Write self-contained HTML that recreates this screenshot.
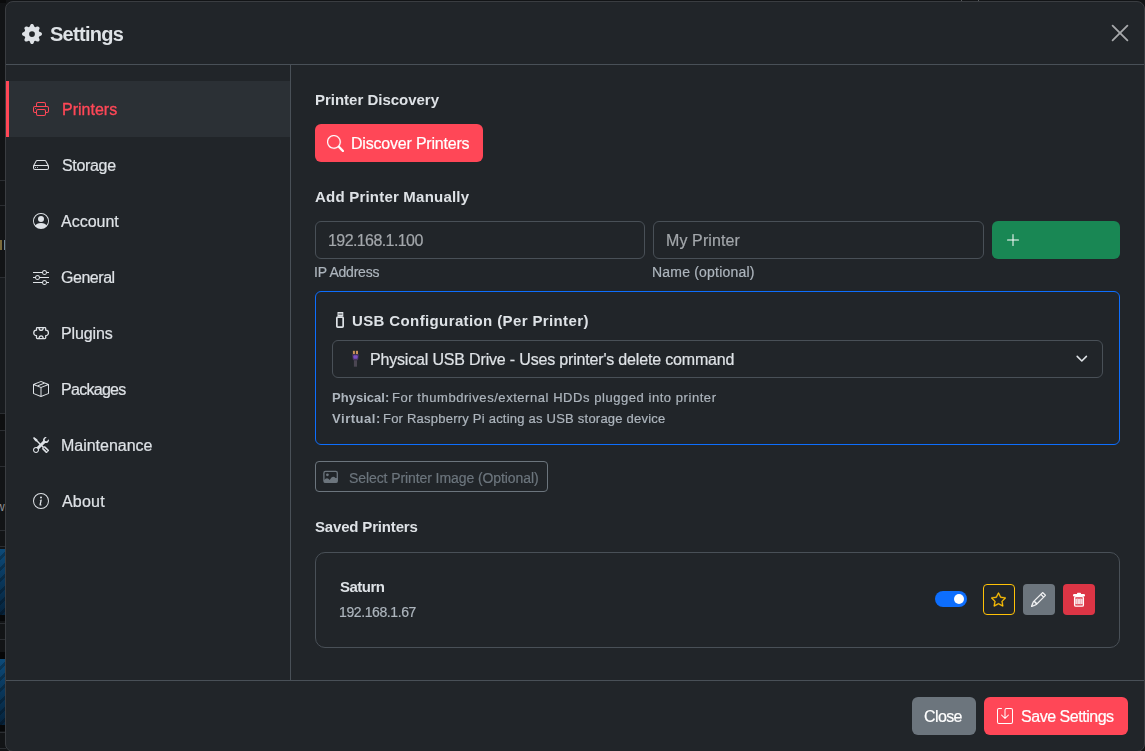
<!DOCTYPE html>
<html><head><meta charset="utf-8">
<style>
*{box-sizing:border-box;margin:0;padding:0}
html,body{width:1145px;height:751px;overflow:hidden;background:#121416;font-family:"Liberation Sans",sans-serif;color:#dee2e6}
.a{position:absolute}
.t{position:absolute;white-space:nowrap;line-height:1;will-change:transform;-webkit-text-stroke:0.2px currentColor}
svg{display:block}
#modal{left:5px;top:1px;width:1140px;height:751px;background:#212529;border:1px solid #3a3d41;border-radius:8px;overflow:hidden}
.hl{position:absolute;height:1px;background:#495057}
.vl{position:absolute;width:1px;background:#495057}
.nav{position:absolute;left:6px;width:284px;height:56px}
.nav .ic{position:absolute;left:27px;top:20px;width:16px;height:16px}
.nav .tx{position:absolute;left:55px;top:0;line-height:1;font-size:16px;white-space:nowrap}
.btn{position:absolute;border-radius:6px}
.inp{position:absolute;border:1px solid #495057;border-radius:6px;background:#212529}
</style></head>
<body>
<!-- background strip -->
<div class="a" style="left:961px;top:0;width:1px;height:2px;background:#55595d"></div>
<div class="a" style="left:978px;top:0;width:1px;height:2px;background:#55595d"></div>
<div class="a" style="left:0;top:0;width:6px;height:3px;background:#0b0c0d"></div>
<div class="a" style="left:0;top:180px;width:5px;height:1px;background:#2a2d31"></div>
<div class="a" style="left:0;top:205px;width:5px;height:1px;background:#2a2d31"></div>
<div class="a" style="left:0;top:240px;width:2px;height:10px;background:#7a6a3a"></div>
<div class="a" style="left:3.5px;top:240px;width:1.5px;height:10px;background:#6f8a98"></div>
<div class="a" style="left:0;top:277px;width:5px;height:1px;background:#2a2d31"></div>
<div class="a" style="left:0;top:278px;width:5px;height:135px;background:#171a1d"></div>
<div class="a" style="left:0;top:413px;width:5px;height:1px;background:#2a2d31"></div>
<div class="a" style="left:0;top:414px;width:5px;height:16px;background:#0e0f10"></div>
<div class="a" style="left:0;top:430px;width:5px;height:1px;background:#2a2d31"></div>
<div class="a" style="left:0;top:466px;width:5px;height:1px;background:#2a2d31"></div>
<div class="a" style="left:-4px;top:500px;font-size:12px;line-height:14px;color:#8f959b">w</div>
<div class="a" style="left:0;top:530px;width:5px;height:1px;background:#2a2d31"></div>
<div class="a" style="left:0;top:546px;width:5px;height:1px;background:#2a2d31"></div>
<div class="a" style="left:0;top:549px;width:5px;height:66px;background:repeating-linear-gradient(135deg,rgba(0,0,0,0) 0 5px,rgba(0,0,0,0.25) 5px 8px),linear-gradient(#0d4a78,#05223b)"></div>
<div class="a" style="left:0;top:615px;width:5px;height:6px;background:#060708"></div>
<div class="a" style="left:0;top:623px;width:5px;height:1px;background:#2a2d31"></div>
<div class="a" style="left:0;top:639px;width:5px;height:1px;background:#2a2d31"></div>
<div class="a" style="left:0;top:652px;width:5px;height:7px;background:#060708"></div>
<div class="a" style="left:0;top:659px;width:5px;height:66px;background:repeating-linear-gradient(135deg,rgba(0,0,0,0) 0 5px,rgba(0,0,0,0.25) 5px 8px),linear-gradient(#0d4a78,#05223b)"></div>
<div class="a" style="left:0;top:725px;width:5px;height:6px;background:#060708"></div>
<div class="a" style="left:0;top:732px;width:5px;height:1px;background:#2a2d31"></div>
<div class="a" style="left:0;top:748px;width:6px;height:1px;background:#2a2d31"></div>

<div id="modal" class="a"></div>

<!-- header -->
<svg class="a" id="gear" style="left:22px;top:24px" width="20" height="20" viewBox="0 0 16 16" fill="#dee2e6"><path d="M9.405 1.05c-.413-1.4-2.397-1.4-2.81 0l-.1.34a1.464 1.464 0 0 1-2.105.872l-.31-.17c-1.283-.698-2.686.705-1.987 1.987l.169.311c.446.82.023 1.841-.872 2.105l-.34.1c-1.4.413-1.4 2.397 0 2.81l.34.1a1.464 1.464 0 0 1 .872 2.105l-.17.31c-.698 1.283.705 2.686 1.987 1.987l.311-.169a1.464 1.464 0 0 1 2.105.872l.1.34c.413 1.4 2.397 1.4 2.81 0l.1-.34a1.464 1.464 0 0 1 2.105-.872l.31.17c1.283.698 2.686-.705 1.987-1.987l-.169-.311a1.464 1.464 0 0 1 .872-2.105l.34-.1c1.4-.413 1.4-2.397 0-2.81l-.34-.1a1.464 1.464 0 0 1-.872-2.105l.17-.31c.698-1.283-.705-2.686-1.987-1.987l-.311.169a1.464 1.464 0 0 1-2.105-.872zM8 10.3a2.3 2.3 0 1 1 0-4.6 2.3 2.3 0 0 1 0 4.6z"/></svg>
<div class="t" id="title" style="left:50.0px;top:24px;font-size:20px;font-weight:bold;color:#dee2e6;letter-spacing:-0.715px;-webkit-text-stroke:0">Settings</div>
<svg class="a" style="left:1111px;top:24px" width="18" height="18" viewBox="0 0 18 18"><path d="M1.6 1.6L16.4 16.4M16.4 1.6L1.6 16.4" stroke="#a7a9ab" stroke-width="1.8" stroke-linecap="round"/></svg>

<div class="hl" style="left:6px;top:64px;width:1138px"></div>
<div class="vl" style="left:290px;top:65px;height:615px"></div>
<div class="hl" style="left:6px;top:680px;width:1138px"></div>

<!-- sidebar -->
<div class="a" style="left:6px;top:81px;width:284px;height:56px;background:#2b3035"></div>
<div class="a" style="left:6px;top:81px;width:3px;height:56px;background:#ff4757"></div>


<!-- nav items -->
<svg class="a" style="left:33px;top:101px" width="16" height="16" viewBox="0 0 16 16" fill="#ff4757"><path d="M2.5 8a.5.5 0 1 0 0-1 .5.5 0 0 0 0 1"/><path d="M5 1a2 2 0 0 0-2 2v2H2a2 2 0 0 0-2 2v3a2 2 0 0 0 2 2h1v1a2 2 0 0 0 2 2h6a2 2 0 0 0 2-2v-1h1a2 2 0 0 0 2-2V7a2 2 0 0 0-2-2h-1V3a2 2 0 0 0-2-2zM4 3a1 1 0 0 1 1-1h6a1 1 0 0 1 1 1v2H4zm1 5a2 2 0 0 0-2 2v1H2a1 1 0 0 1-1-1V7a1 1 0 0 1 1-1h12a1 1 0 0 1 1 1v3a1 1 0 0 1-1 1h-1v-1a2 2 0 0 0-2-2zm7 2v3a1 1 0 0 1-1 1H5a1 1 0 0 1-1-1v-3a1 1 0 0 1 1-1h6a1 1 0 0 1 1 1"/></svg>
<div class="t" id="n1" style="left:62.0px;top:101.5px;font-size:16px;color:#ff4757;-webkit-text-stroke:0.35px #ff4757;letter-spacing:-0.0px">Printers</div>

<svg class="a" style="left:33px;top:157px" width="16" height="16" viewBox="0 0 16 16" fill="#dee2e6"><path d="M4.5 11a.5.5 0 1 0 0-1 .5.5 0 0 0 0 1M3 10.5a.5.5 0 1 1-1 0 .5.5 0 0 1 1 0"/><path d="M16 11a2 2 0 0 1-2 2H2a2 2 0 0 1-2-2V9.51c0-.418.105-.83.305-1.197l2.472-4.531A1.5 1.5 0 0 1 4.094 3h7.812a1.5 1.5 0 0 1 1.317.782l2.472 4.53c.2.368.305.78.305 1.198zM3.655 4.26 1.592 8.043Q1.790 8 2 8h12q.21 0 .408.042L12.345 4.26a.5.5 0 0 0-.439-.26H4.094a.5.5 0 0 0-.44.26zM1 10v1a1 1 0 0 0 1 1h12a1 1 0 0 0 1-1v-1a1 1 0 0 0-1-1H2a1 1 0 0 0-1 1"/></svg>
<div class="t" id="n2" style="left:61.8px;top:157.5px;font-size:16px;letter-spacing:-0.334px">Storage</div>

<svg class="a" style="left:33px;top:213px" width="16" height="16" viewBox="0 0 16 16" fill="#dee2e6"><path d="M11 6a3 3 0 1 1-6 0 3 3 0 0 1 6 0"/><path d="M0 8a8 8 0 1 1 16 0A8 8 0 0 1 0 8m8-7a7 7 0 0 0-5.468 11.37C3.242 11.226 4.805 10 8 10s4.757 1.225 5.468 2.37A7 7 0 0 0 8 1"/></svg>
<div class="t" id="n3" style="left:61.4px;top:213.5px;font-size:16px;letter-spacing:-0.0px">Account</div>

<svg class="a" style="left:33px;top:269px" width="16" height="16" viewBox="0 0 16 16" fill="#dee2e6"><path d="M11.5 2a1.5 1.5 0 1 0 0 3 1.5 1.5 0 0 0 0-3M9.05 3a2.5 2.5 0 0 1 4.9 0H16v1h-2.05a2.5 2.5 0 0 1-4.9 0H0V3zM4.5 7a1.5 1.5 0 1 0 0 3 1.5 1.5 0 0 0 0-3M2.050 8a2.5 2.5 0 0 1 4.9 0H16v1H6.95a2.5 2.5 0 0 1-4.9 0H0V8zm9.45 4a1.5 1.5 0 1 0 0 3 1.5 1.5 0 0 0 0-3m-2.45 1a2.5 2.5 0 0 1 4.9 0H16v1h-2.05a2.5 2.5 0 0 1-4.9 0H0v-1z"/></svg>
<div class="t" id="n4" style="left:61.2px;top:269.5px;font-size:16px;letter-spacing:-0.467px">General</div>

<svg class="a" style="left:30px;top:324px" width="22" height="18" viewBox="30 324 22 18" fill="none" stroke="#dee2e6" stroke-width="1.3" stroke-linejoin="round"><path d="M37.3 327.6H44.9Q45.7 327.6 45.7 328.4V330.2A2.75 2.75 0 0 1 45.7 335.7V337.8Q45.7 338.6 44.9 338.6H37.3Q36.5 338.6 36.5 337.8V335.7A2.75 2.75 0 0 1 36.5 330.2V328.4Q36.5 327.6 37.3 327.6Z"/><path d="M38.9 327.6Q39.2 330.4 41.1 330.4Q43 330.4 43.3 327.6M38.9 338.6Q39.2 335.8 41.1 335.8Q43 335.8 43.3 338.6"/></svg>
<div class="t" id="n5" style="left:61.0px;top:325.5px;font-size:16px;letter-spacing:-0.134px">Plugins</div>

<svg class="a" style="left:33px;top:381px" width="16" height="16" viewBox="0 0 16 16" fill="#dee2e6"><path d="M8.186 1.113a.5.5 0 0 0-.372 0L1.846 3.5l2.404.961L10.404 2zm3.564 1.426L5.596 5 8 5.961 14.154 3.5zm3.25 1.7-6.5 2.6v7.922l6.5-2.6V4.24zM7.5 14.762V6.838L1 4.239v7.923zM7.443.184a1.5 1.5 0 0 1 1.114 0l7.129 2.852A.5.5 0 0 1 16 3.5v8.662a1 1 0 0 1-.629.928l-7.185 2.874a.5.5 0 0 1-.372 0L.63 13.09a1 1 0 0 1-.63-.928V3.5a.5.5 0 0 1 .314-.464z"/></svg>
<div class="t" id="n6" style="left:61.0px;top:381.5px;font-size:16px;letter-spacing:-0.714px">Packages</div>

<svg class="a" style="left:33px;top:437px" width="16" height="16" viewBox="0 0 16 16" fill="#dee2e6"><path d="M1 0 0 1l2.2 3.081a1 1 0 0 0 .815.419h.07a1 1 0 0 1 .708.293l2.675 2.675-2.617 2.654A3.003 3.003 0 0 0 0 13a3 3 0 1 0 5.878-.851l2.654-2.617.968.968-.305.914a1 1 0 0 0 .242 1.023l3.27 3.27a.997.997 0 0 0 1.414 0l1.586-1.586a.997.997 0 0 0 0-1.414l-3.27-3.27a1 1 0 0 0-1.023-.242L10.5 9.5l-.96-.96 2.68-2.643A3.005 3.005 0 0 0 16 3q0-.405-.102-.777l-2.14 2.141L12 4l-.364-1.757L13.777.102a3 3 0 0 0-3.675 3.68L7.462 6.46 4.793 3.793a1 1 0 0 1-.293-.707v-.071a1 1 0 0 0-.419-.814zm9.646 10.646a.5.5 0 0 1 .708 0l2.914 2.915a.5.5 0 0 1-.707.707l-2.915-2.914a.5.5 0 0 1 0-.708M3 11l.471.242.529.026.287.445.445.287.026.529L5 13l-.242.471-.026.529-.445.287-.287.445-.529.026L3 15l-.471-.242L2 14.732l-.287-.445L1.268 14l-.026-.529L1 13l.242-.471.026-.529.445-.287.287-.445.529-.026z"/></svg>
<div class="t" id="n7" style="left:61.0px;top:437.5px;font-size:16px;letter-spacing:-0.02px">Maintenance</div>

<svg class="a" style="left:33px;top:493px" width="16" height="16" viewBox="0 0 16 16" fill="#dee2e6"><path d="M8 15A7 7 0 1 1 8 1a7 7 0 0 1 0 14m0 1A8 8 0 1 0 8 0a8 8 0 0 0 0 16"/><path d="m8.93 6.588-2.29.287-.082.38.45.083c.294.07.352.176.288.469l-.738 3.468c-.194.897.105 1.319.808 1.319.545 0 1.178-.252 1.465-.598l.088-.416c-.2.176-.492.246-.686.246-.275 0-.375-.193-.304-.533zM9 4.5a1 1 0 1 1-2 0 1 1 0 0 1 2 0"/></svg>
<div class="t" id="n8" style="left:61.8px;top:493.5px;font-size:16px;letter-spacing:0.2px">About</div>

<!-- content -->
<div class="t" id="h1" style="left:314.6px;top:92px;font-size:15px;font-weight:bold;letter-spacing:-0.013px;-webkit-text-stroke:0">Printer Discovery</div>
<div class="btn" id="disc" style="left:315px;top:124px;width:168px;height:38px;background:#ff4757"></div>
<svg class="a" style="left:327px;top:134.5px" width="17" height="17" viewBox="0 0 16 16" fill="#fff" stroke="#fff" stroke-width="0.2"><path d="M11.742 10.344a6.5 6.5 0 1 0-1.397 1.398h-.001q.044.06.098.115l3.85 3.85a1 1 0 0 0 1.415-1.414l-3.85-3.850a1 1 0 0 0-.115-.1zM12 6.5a5.5 5.5 0 1 1-11 0 5.5 5.5 0 0 1 11 0"/></svg>
<div class="t" id="disct" style="left:350.8px;top:135.5px;font-size:16px;color:#fff;letter-spacing:-0.2px">Discover Printers</div>

<div class="t" id="h2" style="left:315.0px;top:189px;font-size:15px;font-weight:bold;letter-spacing:0.211px;-webkit-text-stroke:0">Add Printer Manually</div>
<div class="inp" style="left:315px;top:221px;width:330px;height:38px"></div>
<div class="t" id="ip" style="left:328.2px;top:232.5px;font-size:16px;color:#a3a7ab;letter-spacing:-0.583px">192.168.1.100</div>
<div class="inp" style="left:653px;top:221px;width:331px;height:38px"></div>
<div class="t" id="mp" style="left:666.0px;top:232.5px;font-size:16px;color:#a3a7ab;letter-spacing:0.111px">My Printer</div>
<div class="btn" style="left:992px;top:221px;width:128px;height:38px;background:#198754"></div>
<svg class="a" style="left:1005px;top:232px" width="16" height="16" viewBox="0 0 16 16" fill="#fff"><path d="M8 2a.5.5 0 0 1 .5.5v5h5a.5.5 0 0 1 0 1h-5v5a.5.5 0 0 1-1 0v-5h-5a.5.5 0 0 1 0-1h5v-5A.5.5 0 0 1 8 2"/></svg>
<div class="t" id="ipl" style="left:314.0px;top:265px;font-size:14px;color:#adb5bd;letter-spacing:-0.222px">IP Address</div>
<div class="t" id="nml" style="left:652.0px;top:265px;font-size:14px;color:#adb5bd;letter-spacing:0.2px">Name (optional)</div>

<!-- usb card -->
<div class="a" style="left:315px;top:291px;width:805px;height:154px;border:1px solid #0d6efd;border-radius:6px"></div>
<svg class="a" style="left:332px;top:310px" width="16" height="20" viewBox="332 310 16 20"><rect x="337.5" y="312" width="5.8" height="4.4" fill="#dee2e6"/><rect x="338.4" y="313.4" width="4" height="1.4" fill="#6a6e72"/><rect x="336.85" y="317.05" width="6.3" height="10.1" rx="0.9" fill="none" stroke="#dee2e6" stroke-width="1.7"/></svg>
<div class="t" id="usbt" style="left:351.8px;top:313px;font-size:15px;font-weight:bold;letter-spacing:0.38px;-webkit-text-stroke:0">USB Configuration (Per Printer)</div>
<div class="inp" style="left:332px;top:340px;width:771px;height:38px"></div>
<svg class="a" style="left:348px;top:348px" width="14" height="22" viewBox="348 348 14 22"><rect x="352.9" y="350.8" width="2" height="3.4" fill="#c8915a"/><rect x="355.9" y="350.8" width="2.1" height="3.4" fill="#c8915a"/><path d="M352.1 354.3H358.9L358.2 359.4Q357.5 360.4 356.5 360.4H354.5Q353.5 360.4 352.8 359.4Z" fill="#4a3560"/><rect x="353.4" y="355.2" width="4.2" height="3.6" rx="1" fill="#7a4fc0"/><rect x="353.9" y="360.3" width="3.1" height="6.4" fill="#4b4652"/></svg>
<div class="t" id="sel" style="left:370.0px;top:351.5px;font-size:16px;color:#dee2e6;letter-spacing:-0.175px">Physical USB Drive - Uses printer's delete command</div>
<svg class="a" style="left:1070px;top:350px" width="24" height="18" viewBox="1070 350 24 18"><path d="M1077.2 356.4l4.6 4.6 4.6-4.6" fill="none" stroke="#dee2e6" stroke-width="1.6" stroke-linecap="round" stroke-linejoin="round"/></svg>
<div class="t" id="physb" style="left:332.0px;top:391px;font-size:13px;font-weight:bold;color:#adb5bd;letter-spacing:0.025px;-webkit-text-stroke:0">Physical:</div>
<div class="t" id="physr" style="left:391.8px;top:391px;font-size:13px;color:#adb5bd;letter-spacing:0.551px">For thumbdrives/external HDDs plugged into printer</div>
<div class="t" id="virtb" style="left:332.0px;top:411.5px;font-size:13px;font-weight:bold;color:#adb5bd;letter-spacing:0.543px;-webkit-text-stroke:0">Virtual:</div>
<div class="t" id="virtr" style="left:383.4px;top:411.5px;font-size:13px;color:#adb5bd;letter-spacing:0.225px">For Raspberry Pi acting as USB storage device</div>

<div class="a" style="left:315px;top:461px;width:233px;height:31px;border:1px solid #6c757d;border-radius:4px"></div>
<svg class="a" style="left:320px;top:468px" width="20" height="18" viewBox="320 468 20 18"><rect x="323.9" y="471.4" width="13.4" height="11" rx="1.6" fill="none" stroke="#6c757d" stroke-width="1.3"/><circle cx="327.4" cy="474.8" r="1.4" fill="#6c757d"/><path d="M323.9 480.2Q325.5 478.3 327 478.3Q328.5 478.3 329.7 480Q331.5 476.8 333 476.8Q334.5 476.8 335.5 478H337.3V482.4H323.9Z" fill="#6c757d"/></svg>
<div class="t" id="selimg" style="left:349.4px;top:470.5px;font-size:14px;color:#6c757d;letter-spacing:-0.087px">Select Printer Image (Optional)</div>

<div class="t" id="h3" style="left:315.0px;top:519px;font-size:15px;font-weight:bold;letter-spacing:-0.169px;-webkit-text-stroke:0">Saved Printers</div>
<div class="a" style="left:315px;top:552px;width:805px;height:96px;border:1px solid #495057;border-radius:10px"></div>
<div class="t" id="sat" style="left:339.6px;top:579px;font-size:15px;font-weight:bold;letter-spacing:-0.52px;-webkit-text-stroke:0">Saturn</div>
<div class="t" id="satip" style="left:339.0px;top:605px;font-size:14px;color:#adb5bd;letter-spacing:-0.4px">192.168.1.67</div>

<div class="a" style="left:935px;top:591px;width:32px;height:16px;border-radius:8px;background:#0d6efd"></div>
<div class="a" style="left:953.75px;top:593.75px;width:10.5px;height:10.5px;border-radius:50%;background:#fff"></div>
<div class="a" style="left:983px;top:584px;width:32px;height:31px;border:1px solid #ffc107;border-radius:4px"></div>
<svg class="a" style="left:991px;top:592px" width="15" height="15" viewBox="0 0 16 16" fill="#ffc107" stroke="#ffc107" stroke-width="0.35"><path d="M2.866 14.85c-.078.444.36.791.746.593l4.39-2.256 4.389 2.256c.386.198.824-.149.746-.592l-.83-4.73 3.522-3.356c.33-.314.16-.888-.282-.95l-4.898-.696L8.465.792a.513.513 0 0 0-.927 0L5.354 5.120l-4.898.696c-.441.062-.612.636-.283.950l3.523 3.356-.83 4.730zm4.905-2.767-3.686 1.894.694-3.957a.56.56 0 0 0-.163-.505L1.710 6.745l4.052-.576a.53.53 0 0 0 .393-.288L8 2.223l1.847 3.658a.53.53 0 0 0 .393.288l4.052.575-2.906 2.770a.56.56 0 0 0-.163.506l.694 3.957-3.686-1.894a.5.5 0 0 0-.461 0z"/></svg>
<div class="a" style="left:1023px;top:584px;width:32px;height:31px;border-radius:4px;background:#6c757d"></div>
<svg class="a" style="left:1030.9px;top:591.7px" width="15" height="15" viewBox="0 0 16 16" fill="#fff" stroke="#fff" stroke-width="0.3"><path d="M12.146.146a.5.5 0 0 1 .708 0l3 3a.5.5 0 0 1 0 .708l-10 10a.5.5 0 0 1-.168.11l-5 2a.5.5 0 0 1-.65-.65l2-5a.5.5 0 0 1 .11-.168zM11.207 2.5 13.500 4.793 14.793 3.5 12.500 1.207zm1.586 3L10.500 3.207 4 9.707V10h.5a.5.5 0 0 1 .5.5v.5h.5a.5.5 0 0 1 .5.5v.5h.293zm-9.761 5.175-.106.106-1.528 3.821 3.821-1.528.106-.106A.5.5 0 0 1 5 12.500V12h-.5a.5.5 0 0 1-.5-.5V11h-.5a.5.5 0 0 1-.468-.325"/></svg>
<div class="a" style="left:1063px;top:584px;width:32px;height:31px;border-radius:4px;background:#dc3545"></div>
<svg class="a" style="left:1063px;top:584px" width="32" height="31" viewBox="1063 584 32 31"><rect x="1077" y="592.8" width="4" height="1.8" rx="0.8" fill="#fff"/><rect x="1073" y="594" width="12" height="2.4" rx="1.2" fill="#fff"/><rect x="1074.6" y="596.6" width="8.8" height="9.6" rx="1.3" fill="none" stroke="#fff" stroke-width="1.3"/><rect x="1075.3" y="598.6" width="7.4" height="5.6" fill="#f6d6da"/><rect x="1077.2" y="598.6" width="0.8" height="5.6" fill="#eeb0b8"/><rect x="1080" y="598.6" width="0.8" height="5.6" fill="#eeb0b8"/></svg>

<!-- footer -->
<div class="btn" style="left:912px;top:697px;width:64px;height:38px;background:#6c757d"></div>
<div class="t" id="closet" style="left:924.4px;top:708.5px;font-size:16px;color:#fff;letter-spacing:-0.6px">Close</div>
<div class="btn" style="left:984px;top:697px;width:144px;height:38px;background:#ff4757"></div>
<svg class="a" style="left:997px;top:708px" width="16" height="16" viewBox="0 0 16 16" fill="#fff"><path d="M2 1a1 1 0 0 0-1 1v12a1 1 0 0 0 1 1h12a1 1 0 0 0 1-1V2a1 1 0 0 0-1-1H9.5a1 1 0 0 0-1 1v7.293l2.646-2.647a.5.5 0 0 1 .708.708l-3.5 3.5a.5.5 0 0 1-.708 0l-3.5-3.5a.5.5 0 1 1 .708-.708L7.5 9.293V2a2 2 0 0 1 2-2H14a2 2 0 0 1 2 2v12a2 2 0 0 1-2 2H2a2 2 0 0 1-2-2V2a2 2 0 0 1 2-2h2.5a.5.5 0 0 1 0 1z"/></svg>
<div class="t" id="savet" style="left:1021.2px;top:708.5px;font-size:16px;color:#fff;letter-spacing:-0.467px">Save Settings</div>
</body></html>
